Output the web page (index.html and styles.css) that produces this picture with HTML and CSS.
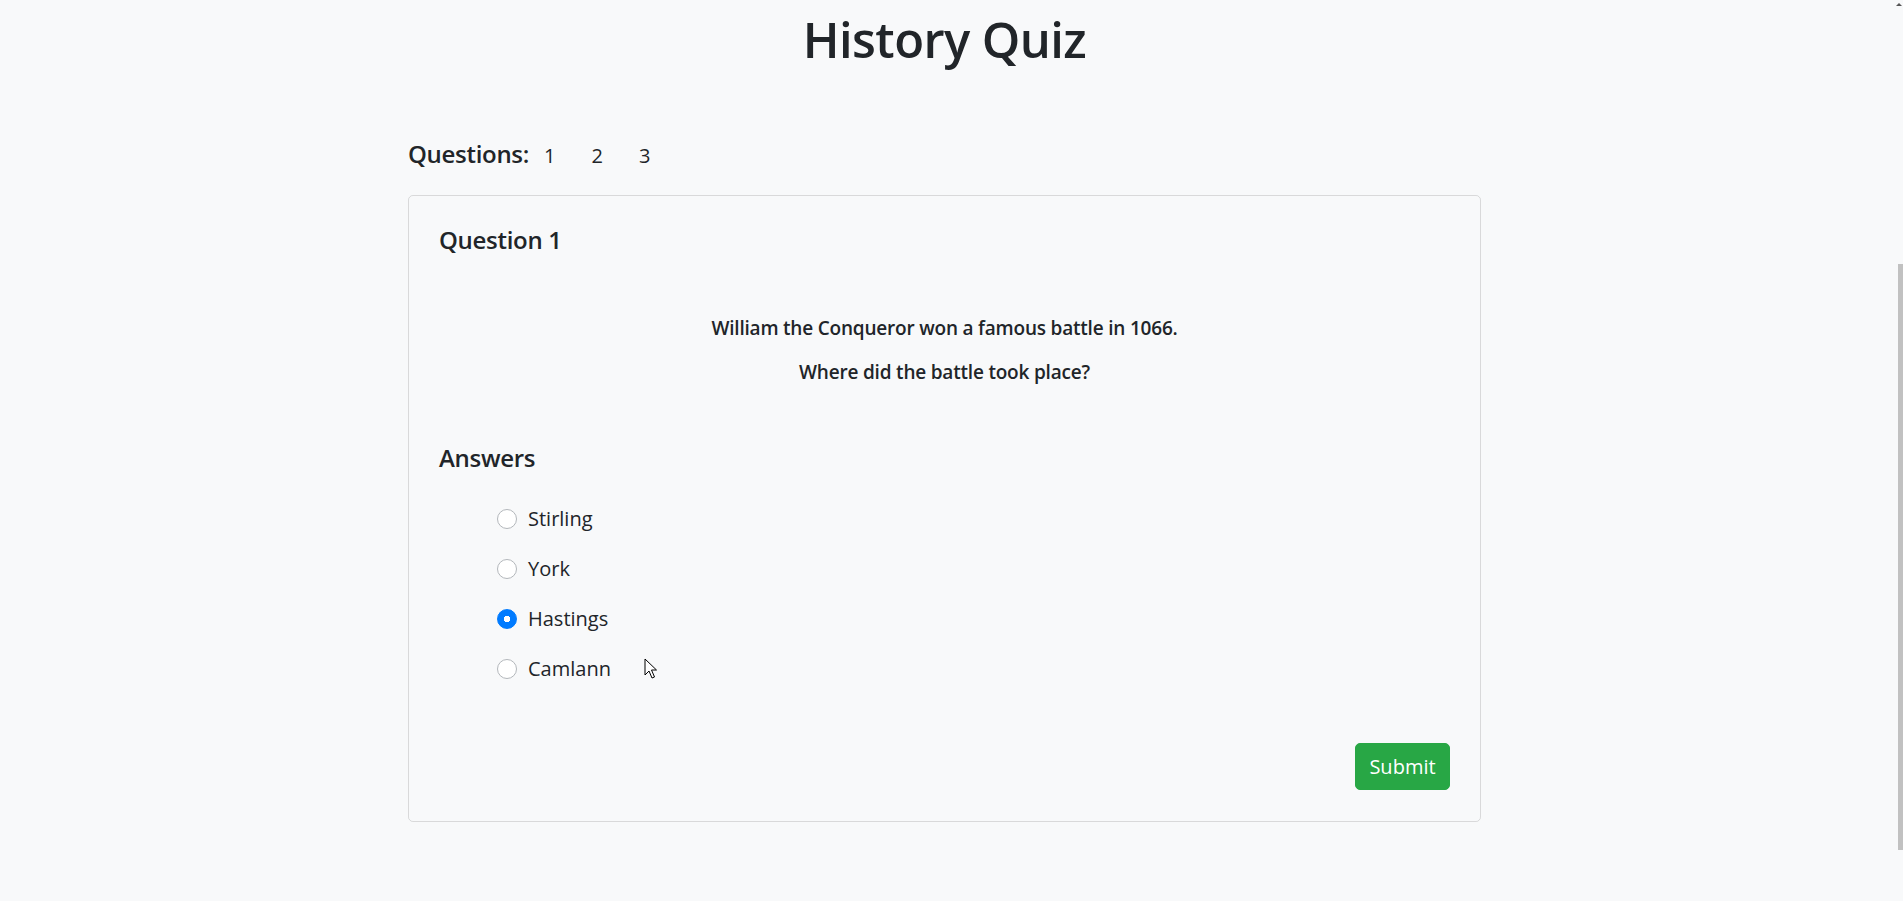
FILE: index.html
```html
<!DOCTYPE html>
<html lang="en">
<head>
<meta charset="utf-8">
<title>History Quiz</title>
<link rel="stylesheet" href="styles.css">
</head>
<body>
<div class="page">
  <h1 class="title">History Quiz</h1>
  <main class="container">
    <nav class="qnav">
      <span class="qnav-label">Questions:</span>
      <a class="qnav-link" href="#">1</a>
      <a class="qnav-link" href="#">2</a>
      <a class="qnav-link" href="#">3</a>
    </nav>
    <section class="card">
      <h5 class="card-heading">Question 1</h5>
      <div class="question-text">
        <p>William the Conqueror won a famous battle in 1066.</p>
        <p>Where did the battle took place?</p>
      </div>
      <h5 class="card-heading answers-heading">Answers</h5>
      <ul class="answers">
        <li class="answer"><input type="radio" name="a" id="a1" class="radio"><label for="a1">Stirling</label></li>
        <li class="answer"><input type="radio" name="a" id="a2" class="radio"><label for="a2">York</label></li>
        <li class="answer"><input type="radio" name="a" id="a3" class="radio" checked><label for="a3">Hastings</label></li>
        <li class="answer"><input type="radio" name="a" id="a4" class="radio"><label for="a4">Camlann</label></li>
      </ul>
      <div class="actions">
        <button class="btn-submit" type="button">Submit</button>
      </div>
    </section>
  </main>
</div>
<div class="scrollbar"><span class="scroll-arrow"></span><span class="scroll-thumb"></span></div>
<svg class="cursor" width="14" height="22" viewBox="0 0 14 22"><path d="M1 1 L1 17 L5 13 L8 20 L10.5 19 L7.5 12 L12.5 12 Z" fill="#fff" stroke="#000" stroke-width="1" stroke-linejoin="round"/></svg>
</body>
</html>
```
FILE: styles.css
```css
html, body {
  margin: 0;
  padding: 0;
}
body {
  background: #f8f9fa;
  color: #212529;
  font-family: "Open Sans", "Noto Sans", sans-serif;
  font-size: 20px;
  line-height: 1.5;
  height: 901px;
  overflow: hidden;
}
.page {
  padding-right: 14px;
}
.title {
  margin: 0;
  padding-top: 10px;
  text-align: center;
  font-size: 49px;
  font-weight: 600;
  letter-spacing: -0.6px;
  line-height: 1.2;
}
.container {
  width: 1073px;
  margin: 0 auto;
}
.qnav {
  display: flex;
  align-items: baseline;
  margin-top: 67px;
  height: 40px;
}
.qnav-label {
  font-size: 24px;
  font-weight: 600;
  letter-spacing: -0.3px;
  margin-right: -3px;
}
.qnav-link {
  color: #212529;
  text-decoration: none;
  padding: 0 18px;
  font-size: 20px;
}
.card {
  margin-top: 19px;
  border: 1px solid rgba(0, 0, 0, 0.125);
  border-radius: 5px;
  padding: 30px 30px 31px;
}
.card-heading {
  margin: 0;
  font-size: 24px;
  font-weight: 600;
  letter-spacing: -0.3px;
  line-height: 1.2;
}
.question-text {
  margin-top: 59px;
  text-align: center;
  font-weight: 600;
  font-size: 19px;
  letter-spacing: -0.2px;
}
.question-text p {
  margin: 0 0 16px;
}
.answers-heading {
  margin-top: 57px;
}
.answers {
  list-style: none;
  margin: 22px 0 0;
  padding: 0 0 0 58px;
}
.answer {
  display: flex;
  align-items: center;
  height: 50px;
}
.radio {
  appearance: none;
  -webkit-appearance: none;
  width: 20px;
  height: 20px;
  margin: 0 11px 0 0;
  border: 1.5px solid #b3b7bb;
  border-radius: 50%;
  background: #fff;
  box-sizing: border-box;
}
.radio:checked {
  border-color: #007bff;
  background: radial-gradient(circle, #fff 0 3px, #007bff 3.5px);
}
.actions {
  display: flex;
  justify-content: flex-end;
  margin-top: 49px;
}
.btn-submit {
  width: 95px;
  height: 47px;
  background: #28a745;
  color: #fff;
  border: 1px solid #28a745;
  border-radius: 5px;
  font-family: inherit;
  font-size: 20px;
  line-height: 1.5;
}
.scrollbar {
  position: fixed;
  top: 0;
  right: 0;
  width: 6px;
  height: 901px;
}
.scroll-arrow {
  position: absolute;
  top: 3px;
  right: 1px;
  width: 0;
  height: 0;
  border-left: 3px solid transparent;
  border-right: 3px solid transparent;
  border-bottom: 3px solid #555;
}
.scroll-thumb {
  position: absolute;
  top: 264px;
  right: 0;
  width: 5px;
  height: 586px;
  background: #c1c1c1;
}
.cursor {
  position: absolute;
  left: 644px;
  top: 658px;
}
```
